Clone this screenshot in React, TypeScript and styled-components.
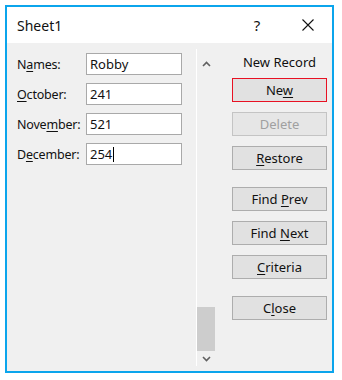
import React from 'react';
import styled, { createGlobalStyle } from 'styled-components';

// ______________________________________________________
//
// @ Data
type Field = { label: string; key: number; value: string; caret?: boolean };

const FIELDS: Field[] = [
  { label: 'Names:', key: 1, value: 'Robby' },
  { label: 'October:', key: 0, value: '241' },
  { label: 'November:', key: 4, value: '521' },
  { label: 'December:', key: 1, value: '254', caret: true },
];

type Action = { text: string; key: number; focused?: boolean; disabled?: boolean; spaced?: boolean };

const ACTIONS: Action[] = [
  { text: 'New', key: 2, focused: true },
  { text: 'Delete', key: -1, disabled: true },
  { text: 'Restore', key: 0 },
  { text: 'Find Prev', key: 5, spaced: true },
  { text: 'Find Next', key: 5 },
  { text: 'Criteria', key: 0 },
  { text: 'Close', key: 1, spaced: true },
];

const Accel: React.FC<{ text: string; at: number }> = ({ text, at }) =>
  at < 0 ? (
    <>{text}</>
  ) : (
    <>
      {text.slice(0, at)}
      <u>{text[at]}</u>
      {text.slice(at + 1)}
    </>
  );

// ______________________________________________________
//
// @ Component
const App: React.FC = () => (
  <>
    <GlobalStyle />
    <Window>
      <TitleBar>
        <Title>Sheet1</Title>
        <Help>?</Help>
        <CloseIcon width="14" height="14" viewBox="0 0 14 14">
          <path d="M1.5 1.5 L12.5 12.5 M12.5 1.5 L1.5 12.5" stroke="#111111" strokeWidth="1.1" />
        </CloseIcon>
      </TitleBar>
      <Body>
        <Fields>
          {FIELDS.map(f => (
            <React.Fragment key={f.label}>
              <Label>
                <Accel text={f.label} at={f.key} />
              </Label>
              <Input>
                {f.value}
                {f.caret && <Caret />}
              </Input>
            </React.Fragment>
          ))}
        </Fields>
        <ScrollBar>
          <Arrow>
            <svg width="9" height="6" viewBox="0 0 9 6">
              <path d="M1 5 L4.5 1.5 L8 5" fill="none" stroke="#606060" strokeWidth="1.6" />
            </svg>
          </Arrow>
          <Track>
            <Thumb />
          </Track>
          <Arrow $down>
            <svg width="9" height="6" viewBox="0 0 9 6">
              <path d="M1 1 L4.5 4.5 L8 1" fill="none" stroke="#606060" strokeWidth="1.6" />
            </svg>
          </Arrow>
        </ScrollBar>
        <Actions>
          <Heading>New Record</Heading>
          {ACTIONS.map(a => (
            <Button key={a.text} $focused={a.focused} $spaced={a.spaced} disabled={a.disabled}>
              <Accel text={a.text} at={a.key} />
            </Button>
          ))}
        </Actions>
      </Body>
    </Window>
  </>
);

// ______________________________________________________
//
// @ Styles
const GlobalStyle = createGlobalStyle`
  html, body {
    margin: 0;
    background: #ffffff;
  }
  body {
    padding: 5px 0 0 5px;
    font-family: "Noto Sans", "Open Sans", sans-serif;
    color: #111111;
  }
  u {
    text-decoration-thickness: 1px;
    text-underline-offset: 2px;
  }
`;

const Window = styled.div`
  width: 325px;
  height: 364px;
  border: 2px solid #0ba5ec;
  display: flex;
  flex-direction: column;
  background: #f0f0f0;
`;

const TitleBar = styled.div`
  height: 36px;
  flex: none;
  background: #ffffff;
  display: flex;
  align-items: center;
  padding: 0 0 0 10px;
`;

const Title = styled.div`
  font-size: 14px;
  flex: 1;
  padding-top: 1px;
`;

const Help = styled.div`
  font-size: 15px;
  width: 16px;
  text-align: center;
  margin-right: 36px;
`;

const CloseIcon = styled.svg`
  margin-right: 17px;
`;

const Body = styled.div`
  flex: 1;
  display: flex;
  padding: 6px 5px 5px 10px;
  font-size: 13px;
`;

const Fields = styled.div`
  display: grid;
  grid-template-columns: 69px 96px;
  grid-auto-rows: 22px;
  row-gap: 8px;
  align-content: start;
  padding-top: 4px;
`;

const Label = styled.div`
  display: flex;
  align-items: center;
  white-space: nowrap;
  font-size: 12.5px;
  letter-spacing: -0.2px;
`;

const Input = styled.div`
  box-sizing: border-box;
  background: #ffffff;
  border: 1px solid #a9a9a9;
  display: flex;
  align-items: center;
  padding-left: 3px;
`;

const Caret = styled.span`
  display: inline-block;
  width: 1px;
  height: 15px;
  background: #000000;
  margin-left: 1px;
`;

const ScrollBar = styled.div`
  margin-left: 14px;
  width: 18px;
  border-left: 1px solid #ffffff;
  display: flex;
  flex-direction: column;
`;

const Arrow = styled.div<{ $down?: boolean }>`
  height: ${p => (p.$down ? 15 : 17)}px;
  margin-top: ${p => (p.$down ? 0 : 6)}px;
  display: flex;
  align-items: center;
  justify-content: center;
`;

const Track = styled.div`
  flex: 1;
  display: flex;
  flex-direction: column;
  justify-content: flex-end;
`;

const Thumb = styled.div`
  height: 44px;
  background: #cdcdcd;
`;

const Actions = styled.div`
  margin-left: 17px;
  width: 95px;
  display: flex;
  flex-direction: column;
`;

const Heading = styled.div`
  text-align: center;
  line-height: 18px;
  margin: 4px 0 7px;
`;

const Button = styled.button<{ $focused?: boolean; $spaced?: boolean }>`
  height: 24px;
  margin-top: ${p => (p.$spaced ? 17 : 10)}px;
  &:first-of-type {
    margin-top: 0;
  }
  padding: 0;
  font: inherit;
  color: #111111;
  background: #e1e1e1;
  border: 1px solid ${p => (p.$focused ? '#e81123' : '#adadad')};
  &:disabled {
    color: #a0a0a0;
    background: #e6e6e6;
    border-color: #c4c4c4;
  }
`;

export default App;
